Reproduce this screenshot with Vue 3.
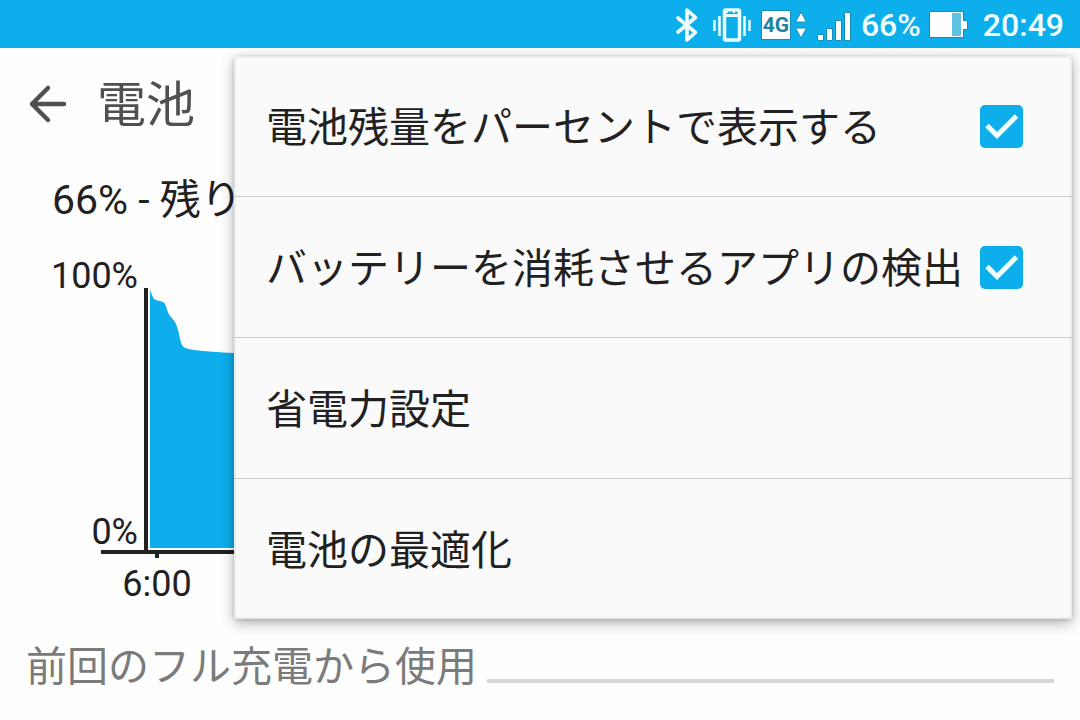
<script setup>
import { ref } from 'vue'

const items = ref([
  { id: 'percent', label: '電池残量をパーセントで表示する', checked: true },
  { id: 'detect', label: 'バッテリーを消耗させるアプリの検出', checked: true },
  { id: 'saver', label: '省電力設定' },
  { id: 'optimize', label: '電池の最適化' },
])
</script>

<template>
  <div class="screen">
    <header class="status">
      <svg class="bt" width="24" height="36" viewBox="0 0 24 36" fill="none" stroke="#f2ffff" stroke-width="3.6" stroke-linejoin="round" stroke-linecap="round">
        <path d="M3 11 20.500 25.500 12 33V3l8.500 7.500L3 25" />
      </svg>
      <svg class="vib" width="38" height="36" viewBox="0 0 38 36" fill="none" stroke="#eaffff">
        <path d="M1.500 13v11M36.500 13v11" stroke-width="2.400" />
        <path d="M6.500 9v20M31.500 9v20" stroke-width="2.600" />
        <rect x="11.500" y="3" width="15" height="30" rx="1.500" stroke-width="3.500" />
        <path d="M11 4.500h16M11 8.500h16" stroke-width="3" />
        <path d="M15 5.500h5M22 5.500h2.500" stroke="#0cafec" stroke-width="1.800" />
      </svg>
      <span class="net">4G</span>
      <svg class="updown" width="12" height="30" viewBox="0 0 12 30" fill="#fff" stroke="#168db8" stroke-width="1">
        <path d="M6 2 11.500 12H.5zM6 28 11.500 18H.5z" />
      </svg>
      <svg class="signal" width="34" height="32" viewBox="0 0 34 32" fill="#fff" stroke="#168db8" stroke-width="1">
        <path d="M.5 24.500h6v6h-6zM9.500 18.500h6v12h-6zM18.500 10.500h6v20h-6zM27.500 2.500h6v28h-6z" />
      </svg>
      <span class="level">66%</span>
      <svg class="cell" width="40" height="28" viewBox="0 0 40 28">
        <path d="M.5.5h34v9h4v9h-4v8H.5z" fill="#fff" stroke="#168db8" />
        <path d="M23 2h9v23h-9z" fill="#60c3e4" />
      </svg>
      <time class="clock">20:49</time>
    </header>

    <main>
      <div class="appbar">
        <button class="back" type="button" aria-label="戻る">
          <svg width="40" height="40" viewBox="0 0 40 40" fill="none" stroke="#505050" stroke-width="4.500" stroke-linecap="round" stroke-linejoin="round">
            <path d="M36 20H4M20 4 4 20l16 16" />
          </svg>
        </button>
        <h1>電池</h1>
      </div>

      <p class="summary">66% - 残り</p>

      <svg class="chart" role="img" aria-label="電池残量のグラフ">
        <path class="area" d="M150 66C152 71 153 75 156 76L163 78C167 80 166 88 171 93L175 98C179 105 180 118 182 121C184 124 187 125 194 126Q212 128 234 129L400 140V324H150Z" />
        <rect class="axis" x="144" y="64" width="4" height="264" />
        <rect class="axis" x="101" y="326" width="85%" height="4" />
        <rect class="axis" x="155" y="330" width="4" height="4" />
        <text x="138" y="64" text-anchor="end">100%</text>
        <text x="138" y="320" text-anchor="end">0%</text>
        <text x="157" y="372" text-anchor="middle">6:00</text>
      </svg>

      <div class="section">
        <h2>前回のフル充電から使用</h2>
        <hr />
      </div>
    </main>

    <ul class="menu">
      <li v-for="item in items" :key="item.id">
        <label v-if="item.checked !== undefined" class="row" :for="item.id">
          <span class="name">{{ item.label }}</span>
          <span class="tick">
            <input :id="item.id" v-model="item.checked" type="checkbox" />
            <svg v-if="item.checked" width="43" height="43" viewBox="0 0 43 43" fill="none" stroke="#f2ffff" stroke-width="5">
              <path d="M7 20.500 17 30.500 36.500 11" />
            </svg>
          </span>
        </label>
        <button v-else class="row" type="button">
          <span class="name">{{ item.label }}</span>
        </button>
      </li>
    </ul>
  </div>
</template>

<style>
body {
  margin: 0;
  background: #fefefe;
}
</style>

<style scoped>
.screen {
  position: relative;
  min-height: 100vh;
  overflow: hidden;
  box-sizing: border-box;
  color: #212121;
  font-family: Roboto, "Noto Sans CJK JP", sans-serif;
}
.status {
  display: flex;
  align-items: center;
  justify-content: flex-end;
  height: 48px;
  padding: 2px 16px 0 0;
  box-sizing: border-box;
  background: #0cafec;
  color: #f2ffff;
  font-size: 32px;
  font-weight: 500;
  line-height: 48px;
}
.status svg {
  flex: none;
}
.vib {
  margin-left: 14px;
}
.net {
  display: flex;
  align-items: center;
  justify-content: center;
  width: 28px;
  height: 28px;
  margin-left: 10px;
  border: 1px solid #168db8;
  background: #fff;
  color: #24819f;
  font-size: 21px;
  font-weight: 700;
}
.updown {
  margin-left: 4px;
}
.signal {
  margin: 2px 10px 0;
}
.cell {
  margin: 0 14px 0 8px;
}
.appbar {
  display: flex;
  align-items: center;
  height: 112px;
  padding-left: 28px;
}
.back {
  display: flex;
  margin: 0 29px 0 0;
  padding: 0;
  border: 0;
  background: none;
}
h1 {
  margin: 0;
  padding-top: 4px;
  color: #505050;
  font-size: 49px;
  font-weight: 400;
  line-height: 56px;
}
.summary {
  margin: 16px 0 0 52px;
  font-size: 41px;
  line-height: 48px;
}
.chart {
  display: block;
  width: 100%;
  height: 400px;
}
.chart text {
  fill: #212121;
  font-size: 36px;
}
.area {
  fill: #0cafec;
}
.axis {
  fill: #212121;
}
.section {
  display: flex;
  align-items: center;
  margin-top: 19px;
  padding: 0 26px;
}
h2 {
  margin: 0;
  color: #7b7b7b;
  font-size: 41px;
  font-weight: 400;
  line-height: 48px;
}
hr {
  flex: 1;
  height: 4px;
  margin: 28px 0 0 10px;
  border: 0;
  background: #d6d6d6;
}
.menu {
  position: absolute;
  top: 56px;
  left: 234px;
  right: 8px;
  margin: 0;
  padding: 0;
  list-style: none;
  background: #fafafa;
  border-radius: 3px;
  box-shadow: inset 0 0 0 2px #ececec, 0 4px 14px rgba(0, 0, 0, 0.3), 0 1px 4px rgba(0, 0, 0, 0.15);
}
li + li {
  border-top: 1px solid #cacaca;
}
.row {
  display: flex;
  align-items: center;
  justify-content: space-between;
  width: 100%;
  height: 140px;
  margin: 0;
  padding: 0 49px 0 32px;
  box-sizing: border-box;
  border: 0;
  background: none;
  color: #212121;
  font-family: inherit;
  font-size: 41px;
  line-height: 48px;
  text-align: left;
  white-space: nowrap;
}
.name {
  padding-top: 4px;
}
.tick {
  display: grid;
  flex: none;
}
.tick input,
.tick svg {
  grid-area: 1 / 1;
}
.tick svg {
  pointer-events: none;
}
.tick input {
  appearance: none;
  width: 43px;
  height: 43px;
  margin: 0;
  border: 2px solid #0cafec;
  border-radius: 5px;
}
.tick input:checked {
  background: #0cafec;
}
</style>
